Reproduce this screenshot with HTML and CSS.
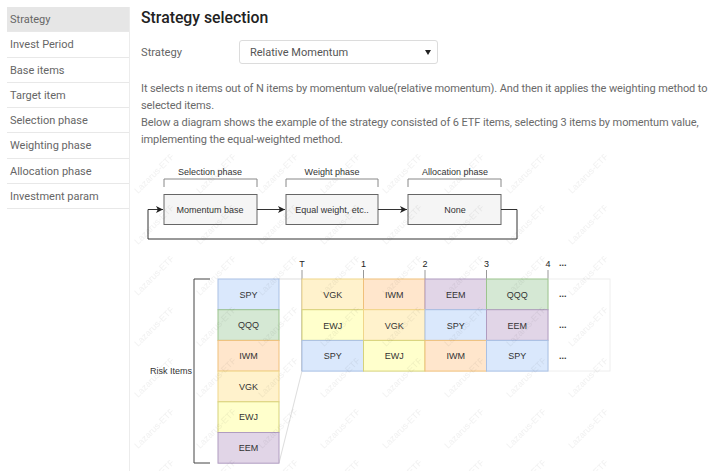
FILE: index.html
```html
<!DOCTYPE html>
<html lang="en">
<head>
  <meta charset="UTF-8" />
  <meta name="viewport" content="width=device-width, initial-scale=1.0"/>
  <title>Strategy selection</title>
  <link rel="stylesheet" href="styles.css">
</head>
<body>
  <div class="page">
    <ul class="side-menu">
      <li class="menu-item active">Strategy</li>
      <li class="menu-item">Invest Period</li>
      <li class="menu-item">Base items</li>
      <li class="menu-item">Target item</li>
      <li class="menu-item">Selection phase</li>
      <li class="menu-item">Weighting phase</li>
      <li class="menu-item">Allocation phase</li>
      <li class="menu-item">Investment param</li>
    </ul>

    <div class="content">
      <h1 class="title">Strategy selection</h1>

      <div class="form-row">
        <label class="form-label">Strategy</label>
        <div class="select-box">
          <span>Relative Momentum</span>
          <span class="caret"></span>
        </div>
      </div>

      <p class="desc">
        It selects n items out of N items by momentum value(relative momentum). And then it applies the weighting method to selected items.<br>
        Below a diagram shows the example of the strategy consisted of 6 ETF items, selecting 3 items by momentum value, implementing the equal-weighted method.
      </p>

      <!-- diagram, drawn in page coordinates -->
      <svg class="diagram" width="579" height="321" viewBox="141 150 579 321">
        <defs>
          <marker id="arrow" markerWidth="8" markerHeight="8" refX="7" refY="4" orient="auto" markerUnits="userSpaceOnUse">
            <path d="M0,0.5 L7,4 L0,7.5 L1.8,4 Z" fill="#222"/>
          </marker>
          <pattern id="wm" x="0" y="0" width="62" height="51" patternUnits="userSpaceOnUse">
            <text x="0" y="0" transform="translate(14 40) rotate(-45)" class="wm-text">Lazarus-ETF</text>
          </pattern>
        </defs>

        <!-- phases -->
        <g class="label-mid">
          <text x="210" y="174">Selection phase</text>
          <text x="332" y="174">Weight phase</text>
          <text x="455" y="174">Allocation phase</text>
        </g>
        <g class="bracket">
          <path d="M164 186 V178 H257 V186"/>
          <path d="M286 186 V178 H378 V186"/>
          <path d="M408 186 V178 H501 V186"/>
        </g>
        <g class="phase-box">
          <rect x="164" y="193.5" width="93" height="30"/>
          <rect x="286" y="193.5" width="92" height="30"/>
          <rect x="408" y="193.5" width="93" height="30"/>
        </g>
        <g class="label-mid">
          <text x="210" y="212">Momentum base</text>
          <text x="332" y="212">Equal weight, etc..</text>
          <text x="455" y="212">None</text>
        </g>
        <g class="flow">
          <path d="M257 208.5 H285" marker-end="url(#arrow)"/>
          <path d="M378 208.5 H407" marker-end="url(#arrow)"/>
          <path d="M501 208.5 H517 V238 H148 V208.5 H163" marker-end="url(#arrow)"/>
        </g>

        <!-- zoom guide lines -->
        <g class="guide">
          <path d="M279 278 H302"/>
          <path d="M279 462 L302 370"/>
        </g>

        <!-- risk items -->
        <path class="risk-bracket" d="M210 278 H194 V462 H210"/>
        <text class="label-end" x="192" y="373">Risk Items</text>

        <g class="cells">
          <rect class="c-blue" x="218" y="278" width="61" height="30.7"/>
          <rect class="c-green" x="218" y="308.7" width="61" height="30.7"/>
          <rect class="c-orange" x="218" y="339.4" width="61" height="30.7"/>
          <rect class="c-sand" x="218" y="370.1" width="61" height="30.7"/>
          <rect class="c-yellow" x="218" y="400.8" width="61" height="30.7"/>
          <rect class="c-purple" x="218" y="431.5" width="61" height="30.7"/>
        </g>
        <g class="label-mid">
          <text x="248.5" y="296.5">SPY</text>
          <text x="248.5" y="327">QQQ</text>
          <text x="248.5" y="358">IWM</text>
          <text x="248.5" y="388.5">VGK</text>
          <text x="248.5" y="419">EWJ</text>
          <text x="248.5" y="450">EEM</text>
        </g>

        <!-- timeline -->
        <g class="tick-label">
          <text x="302" y="266">T</text>
          <text x="363.5" y="266">1</text>
          <text x="425" y="266">2</text>
          <text x="486.5" y="266">3</text>
          <text x="548" y="266">4</text>
        </g>
        <g class="ticks">
          <path d="M302 269 V370"/>
          <path d="M363.5 269 V278"/>
          <path d="M425 269 V278"/>
          <path d="M486.5 269 V278"/>
          <path d="M548 269 V278"/>
        </g>
        <rect class="more-box" x="548" y="278" width="62" height="92"/>

        <g class="cells">
          <rect class="c-sand" x="302" y="278" width="61.5" height="30.7"/>
          <rect class="c-orange" x="363.5" y="278" width="61.5" height="30.7"/>
          <rect class="c-purple" x="425" y="278" width="61.5" height="30.7"/>
          <rect class="c-green" x="486.5" y="278" width="61.5" height="30.7"/>

          <rect class="c-yellow" x="302" y="308.7" width="61.5" height="30.7"/>
          <rect class="c-sand" x="363.5" y="308.7" width="61.5" height="30.7"/>
          <rect class="c-blue" x="425" y="308.7" width="61.5" height="30.7"/>
          <rect class="c-purple" x="486.5" y="308.7" width="61.5" height="30.7"/>

          <rect class="c-blue" x="302" y="339.4" width="61.5" height="30.7"/>
          <rect class="c-yellow" x="363.5" y="339.4" width="61.5" height="30.7"/>
          <rect class="c-orange" x="425" y="339.4" width="61.5" height="30.7"/>
          <rect class="c-blue" x="486.5" y="339.4" width="61.5" height="30.7"/>
        </g>
        <g class="label-mid">
          <text x="332.75" y="296.5">VGK</text>
          <text x="394.25" y="296.5">IWM</text>
          <text x="455.75" y="296.5">EEM</text>
          <text x="517.25" y="296.5">QQQ</text>

          <text x="332.75" y="327.5">EWJ</text>
          <text x="394.25" y="327.5">VGK</text>
          <text x="455.75" y="327.5">SPY</text>
          <text x="517.25" y="327.5">EEM</text>

          <text x="332.75" y="358">SPY</text>
          <text x="394.25" y="358">EWJ</text>
          <text x="455.75" y="358">IWM</text>
          <text x="517.25" y="358">SPY</text>
        </g>
        <g class="dots">
          <text x="559" y="265">...</text>
          <text x="559" y="296">...</text>
          <text x="559" y="327">...</text>
          <text x="559" y="358">...</text>
        </g>

        <rect x="130" y="150" width="487" height="321" fill="url(#wm)"/>
      </svg>
    </div>
  </div>
</body>
</html>
```

FILE: styles.css
```css
body {
    margin: 0;
    background: #ffffff;
    font-family: Roboto, 'Noto Sans', sans-serif;
    color: #666;
}
.page {
    display: flex;
    padding: 7px 0 0 7px;
    min-height: 464px;
    overflow: hidden;
}
.side-menu {
    list-style: none;
    margin: 0;
    padding: 0;
    width: 122px;
    flex-shrink: 0;
    border-right: 1px solid #ececec;
}
.menu-item {
    height: 24.3px;
    line-height: 25px;
    padding-left: 3px;
    font-size: 11px;
    color: #666;
    border-bottom: 1px solid #e8e8e8;
}
.menu-item.active {
    background: #e6e6e6;
}
.content {
    padding-left: 11px;
    flex: 1;
}
.title {
    margin: 0;
    font-size: 15.8px;
    font-weight: 500;
    color: #222;
    line-height: 20px;
    padding-top: 1px;
}
.form-row {
    display: flex;
    align-items: center;
    margin-top: 12px;
}
.form-label {
    width: 98px;
    font-size: 11.2px;
    color: #666;
}
.select-box {
    box-sizing: border-box;
    width: 199px;
    height: 24px;
    border: 1px solid #dcdcdc;
    border-radius: 3px;
    display: flex;
    align-items: center;
    justify-content: space-between;
    padding: 0 6px 0 10px;
    font-size: 11px;
    color: #555;
}
.caret {
    width: 0;
    height: 0;
    border-left: 3px solid transparent;
    border-right: 3px solid transparent;
    border-top: 5px solid #222;
}
.desc {
    margin: 16px 0 0;
    font-size: 11px;
    letter-spacing: -0.1px;
    line-height: 17px;
    color: #6a6a6a;
}
.diagram {
    display: block;
    margin-top: 3px;
    overflow: visible;
    font-family: 'Liberation Sans', Arial, sans-serif;
}
.label-mid text {
    font-size: 9px;
    fill: #333;
    text-anchor: middle;
}
.label-end {
    font-size: 9px;
    fill: #333;
    text-anchor: end;
}
.bracket path,
.guide path {
    fill: none;
    stroke: #888;
    stroke-width: 1;
}
.guide path {
    stroke: #ddd;
}
.phase-box rect {
    fill: #f5f5f5;
    stroke: #666;
    stroke-width: 1;
}
.flow path {
    fill: none;
    stroke: #333;
    stroke-width: 1;
}
.risk-bracket {
    fill: none;
    stroke: #444;
    stroke-width: 1;
}
.ticks path {
    stroke: #999;
    stroke-width: 1;
}
.tick-label text {
    font-size: 9px;
    fill: #222;
    text-anchor: middle;
}
.more-box {
    fill: #fff;
    stroke: #eee;
}
.dots text {
    font-size: 9px;
    fill: #333;
    font-weight: bold;
}
.cells rect {
    stroke-width: 1;
}
.c-blue { fill: #dae8fc; stroke: #a9c0e4; }
.c-green { fill: #d5e8d4; stroke: #9cc48e; }
.c-orange { fill: #ffe6cc; stroke: #f0c07a; }
.c-sand { fill: #fff2cc; stroke: #f0d68a; }
.c-yellow { fill: #ffffcc; stroke: #d6d27a; }
.c-purple { fill: #e1d5e7; stroke: #b09cc0; }
.wm-text {
    font-size: 9px;
    fill: #000;
    fill-opacity: 0.06;
}
```
